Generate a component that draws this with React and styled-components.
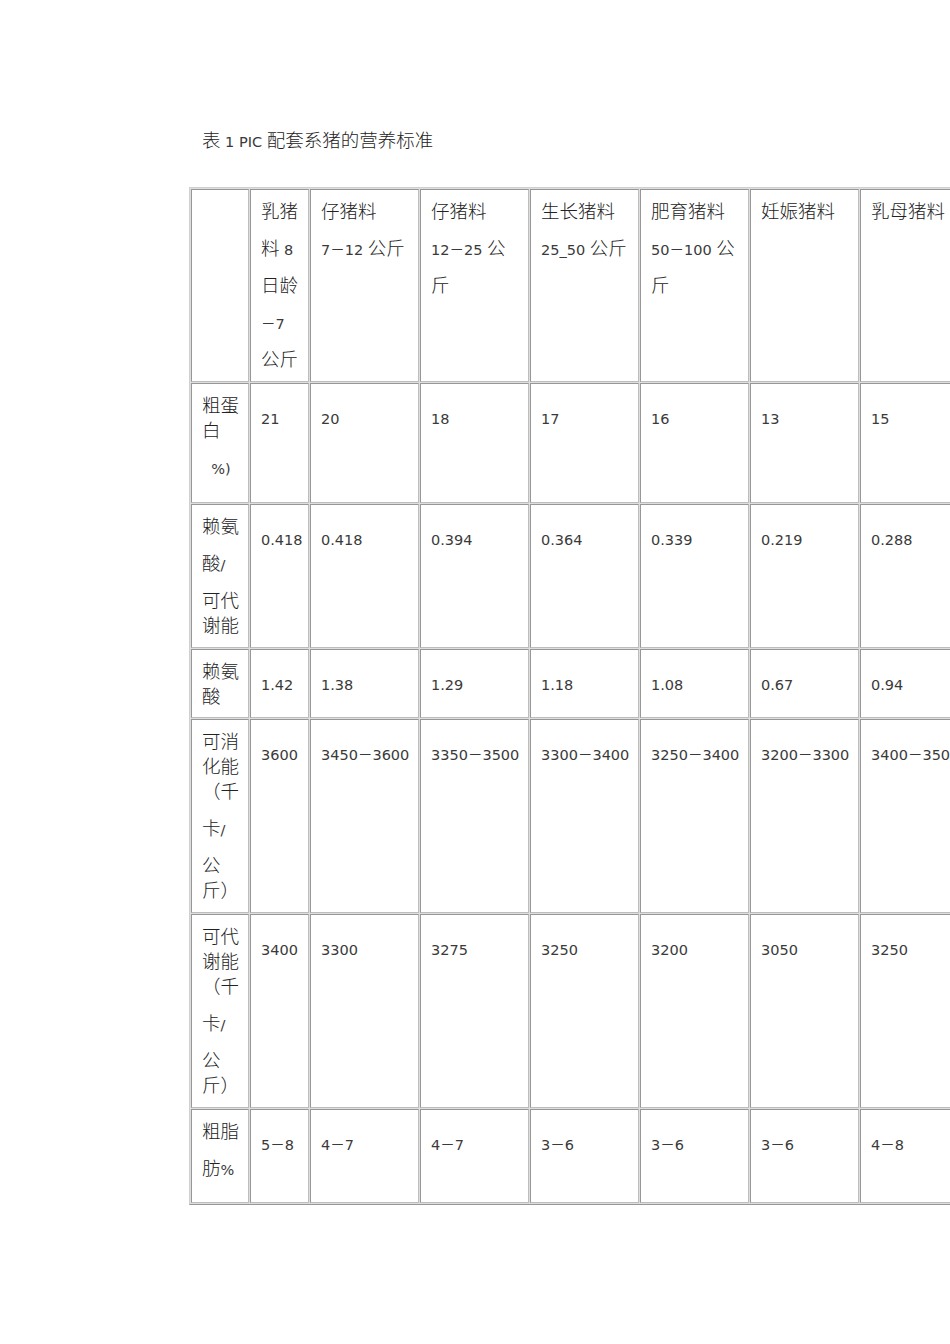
import React from 'react';
import styled, { createGlobalStyle } from 'styled-components';

const Global = createGlobalStyle`
  html, body { margin: 0; padding: 0; background: #fff; overflow: hidden; }
`;

const Page = styled.div`
  width: 950px;
  height: 1344px;
  overflow: hidden;
  box-sizing: border-box;
  padding: 127px 0 0 189px;
  font-family: "Noto Sans CJK SC", sans-serif;
  font-weight: 300;
  color: #222;
  background: #fff;
`;

const Title = styled.div`
  margin-left: 13px;
  height: 25px;
  line-height: 25px;
  font-size: 18.5px;
  white-space: pre;
`;

const Table = styled.table`
  margin-top: 35px;
  border-collapse: separate;
  border-spacing: 1px;
  border: 1px solid;
  border-color: #d0d0d0 #979797 #979797 #d0d0d0;
  background: #dedede;
  table-layout: fixed;
  width: 782px;
`;

const Col = styled.col`
  width: ${(p) => p.$w}px;
`;

const Row = styled.tr`
  height: ${(p) => p.$h}px;
`;

const Cell = styled.td`
  box-sizing: border-box;
  border: 1px solid;
  border-color: #979797 #bdbdbd #bdbdbd #979797;
  background: #fff;
  padding: 8px 0 0 10px;
  vertical-align: top;
  overflow: hidden;
  font-size: 18.5px;
`;

const Line = styled.div`
  box-sizing: border-box;
  height: ${(p) => (p.$tall ? 37 : 25)}px;
  padding-top: ${(p) => (p.$tall ? 12 : 0)}px;
  line-height: 25px;
  white-space: pre;
`;

const Lat = styled.span`
  font-family: "DejaVu Sans", "Noto Sans CJK SC", sans-serif;
  font-size: 14.5px;
  font-weight: 400;
  color: #3a3a3a;
`;

function Mixed({ text }) {
  const parts = text.split(/([\u4E00-\u9FFF\uFF08\uFF09]+)/).filter(Boolean);
  return parts.map((p, i) =>
    /[\u4E00-\u9FFF\uFF08\uFF09]/.test(p) ? <span key={i}>{p}</span> : <Lat key={i}>{p}</Lat>
  );
}

const widths = [58, 59, 109, 109, 109, 109, 109, 109];

const header = [
  [],
  [["乳猪", 0], ["料 8", 1], ["日龄", 1], ["－7", 1], ["公斤", 1]],
  [["仔猪料", 0], ["7－12 公斤", 1]],
  [["仔猪料", 0], ["12－25 公", 1], ["斤", 1]],
  [["生长猪料", 0], ["25_50 公斤", 1]],
  [["肥育猪料", 0], ["50－100 公", 1], ["斤", 1]],
  [["妊娠猪料", 0]],
  [["乳母猪料", 0]],
];

const rows = [
  {
    h: 120,
    label: [["粗蛋", 0], ["白", 0], ["\u00a0\u00a0%)", 1]],
    values: ["21", "20", "18", "17", "16", "13", "15"],
  },
  {
    h: 144,
    label: [["赖氨", 0], ["酸/", 1], ["可代", 1], ["谢能", 0]],
    values: ["0.418", "0.418", "0.394", "0.364", "0.339", "0.219", "0.288"],
  },
  {
    h: 69,
    label: [["赖氨", 0], ["酸", 0]],
    values: ["1.42", "1.38", "1.29", "1.18", "1.08", "0.67", "0.94"],
  },
  {
    h: 194,
    label: [["可消", 0], ["化能", 0], ["（千", 0], ["卡/", 1], ["公", 1], ["斤）", 0]],
    values: ["3600", "3450－3600", "3350－3500", "3300－3400", "3250－3400", "3200－3300", "3400－3500"],
  },
  {
    h: 194,
    label: [["可代", 0], ["谢能", 0], ["（千", 0], ["卡/", 1], ["公", 1], ["斤）", 0]],
    values: ["3400", "3300", "3275", "3250", "3200", "3050", "3250"],
  },
  {
    h: 94,
    label: [["粗脂", 0], ["肪%", 1]],
    values: ["5－8", "4－7", "4－7", "3－6", "3－6", "3－6", "4－8"],
  },
];

function Lines({ lines }) {
  return lines.map(([t, tall], i) => (
    <Line key={i} $tall={!!tall}>
      <Mixed text={t} />
    </Line>
  ));
}

export default function App() {
  return (
    <Page>
      <Global />
      <Title>
        <Mixed text="表 1 PIC 配套系猪的营养标准" />
      </Title>
      <Table>
        <colgroup>
          {widths.map((w, i) => (
            <Col key={i} $w={w} />
          ))}
        </colgroup>
        <tbody>
          <Row $h={193}>
            {header.map((lines, i) => (
              <Cell key={i}>
                <Lines lines={lines} />
              </Cell>
            ))}
          </Row>
          {rows.map((r, ri) => (
            <Row key={ri} $h={r.h}>
              <Cell>
                <Lines lines={r.label} />
              </Cell>
              {r.values.map((v, vi) => (
                <Cell key={vi}>
                  <Lines lines={[[v, 1]]} />
                </Cell>
              ))}
            </Row>
          ))}
        </tbody>
      </Table>
    </Page>
  );
}
